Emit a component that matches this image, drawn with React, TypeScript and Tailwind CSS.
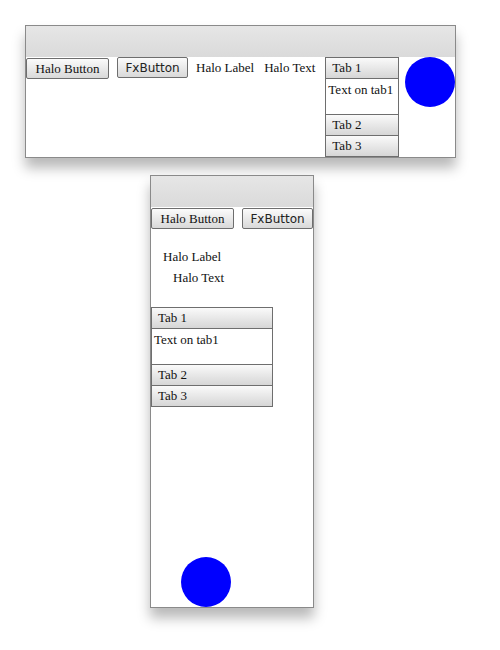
const serif = 'font-["Liberation_Serif","DejaVu_Serif",serif]';

function HaloButton({ className = '' }: { className?: string }) {
  return (
    <div
      className={`shrink-0 flex items-center justify-center h-[21px] w-[83px] rounded-[2px] border border-[#6e6e6e] bg-gradient-to-b from-[#fbfbfb] to-[#d9d9d9] text-[13px] text-[#111] whitespace-nowrap ${serif} ${className}`}
    >
      Halo Button
    </div>
  );
}

function FxButton({ className = '' }: { className?: string }) {
  return (
    <div
      className={`shrink-0 flex items-center justify-center h-[21px] w-[71px] rounded-[2px] border border-[#6e6e6e] bg-gradient-to-b from-[#fbfbfb] to-[#d9d9d9] text-[12px] text-[#222] whitespace-nowrap font-["DejaVu_Sans",sans-serif] ${className}`}
    >
      FxButton
    </div>
  );
}

function TabHeader({ label }: { label: string }) {
  return (
    <div className="h-[22px] flex items-center pl-[6px] border border-[#6e6e6e] -mt-px first:mt-0 bg-gradient-to-b from-[#fafafa] to-[#d6d6d6] text-[13px] text-[#111]">
      {label}
    </div>
  );
}

function Tabs({ width }: { width: string }) {
  return (
    <div className={`shrink-0 flex flex-col whitespace-nowrap ${width} ${serif}`}>
      <TabHeader label="Tab 1" />
      <div className="h-[36px] border-x border-[#6e6e6e] pl-[2px] pt-[1px] text-[13px] text-[#111] bg-white">
        Text on tab1
      </div>
      <TabHeader label="Tab 2" />
      <TabHeader label="Tab 3" />
    </div>
  );
}

function Circle() {
  return <div className="shrink-0 w-[50px] h-[50px] rounded-full bg-[#0000ff]" />;
}

function Label({ text, className = '' }: { text: string; className?: string }) {
  return <div className={`shrink-0 whitespace-nowrap text-[13px] text-[#111] ${serif} ${className}`}>{text}</div>;
}

export default function App() {
  return (
    <div className="relative w-[500px] h-[650px] bg-white">
      {/* wide window */}
      <div className="absolute left-[25px] top-[25px] w-[431px] h-[133px] border border-[#8a8a8a] bg-white flex flex-col shadow-[0_10px_12px_rgba(0,0,0,0.28)]">
        <div className="h-[31px] bg-gradient-to-b from-[#e6e6e6] to-[#dadada]" />
        <div className="flex flex-1 items-start">
          <HaloButton className="mt-px" />
          <FxButton className="ml-[8px]" />
          <Label text="Halo Label" className="ml-[8px] mt-[1px]" />
          <Label text="Halo Text" className="ml-[10px] mt-[1px]" />
          <div className="ml-[10px]">
            <Tabs width="w-[74px]" />
          </div>
          <div className="ml-[6px]">
            <Circle />
          </div>
        </div>
      </div>

      {/* tall window */}
      <div className="absolute left-[150px] top-[175px] w-[164px] h-[433px] border border-[#8a8a8a] bg-white flex flex-col shadow-[0_10px_12px_rgba(0,0,0,0.28)]">
        <div className="h-[31px] bg-gradient-to-b from-[#e6e6e6] to-[#dadada]" />
        <div className="flex items-start">
          <HaloButton className="mt-px" />
          <FxButton className="ml-[8px] mt-px" />
        </div>
        <Label text="Halo Label" className="ml-[12px] mt-[18px]" />
        <Label text="Halo Text" className="ml-[22px] mt-[1px]" />
        <div className="mt-[20px]">
          <Tabs width="w-[122px]" />
        </div>
        <div className="mt-auto ml-[30px]">
          <Circle />
        </div>
      </div>
    </div>
  );
}
